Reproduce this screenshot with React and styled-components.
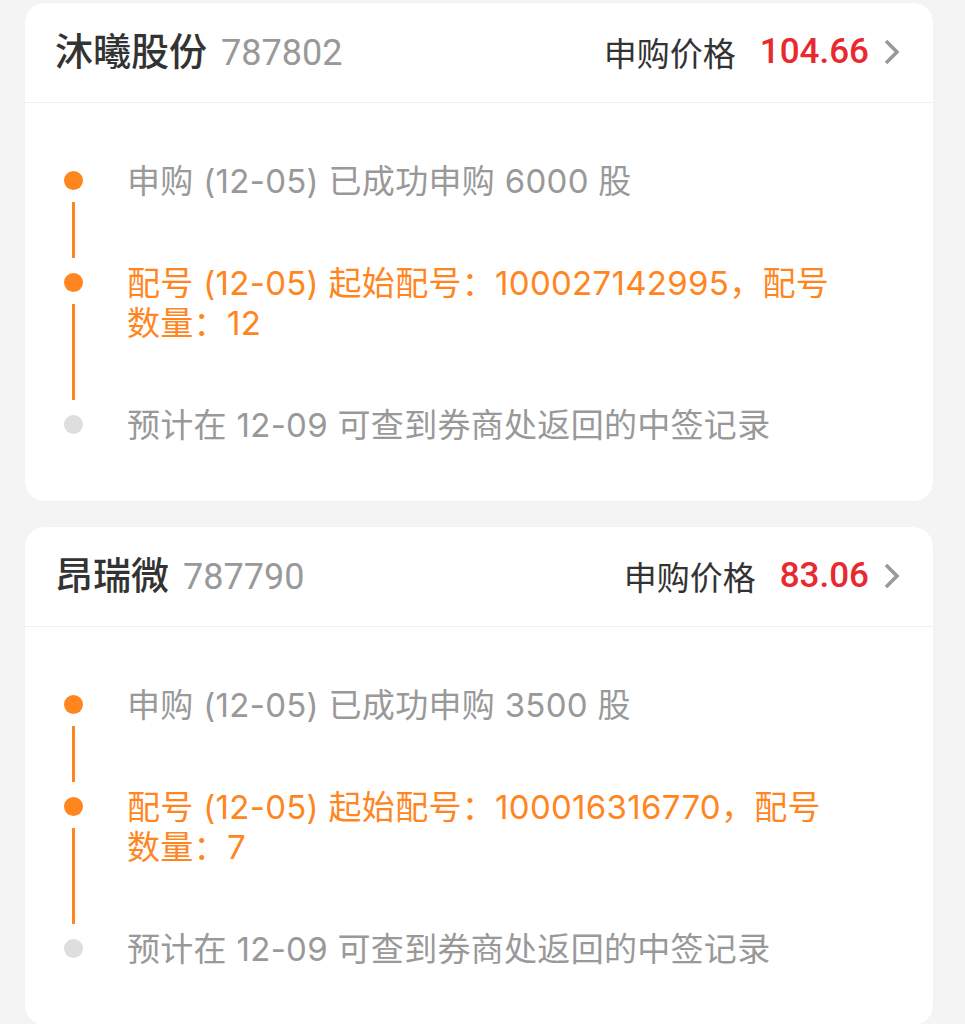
import React from "react";
import styled, { createGlobalStyle } from "styled-components";

const Global = createGlobalStyle`
  body {
    margin: 0;
    background: #f4f4f4;
    font-family: "Noto Sans CJK SC", "Noto Sans", sans-serif;
  }
`;

const Page = styled.div`
  display: flex;
  flex-direction: column;
  gap: 26px;
  padding: 3px 32px 40px 25px;
`;

const Card = styled.div`
  background: #fff;
  border-radius: 20px;
  overflow: hidden;
`;

const Header = styled.div`
  display: flex;
  align-items: center;
  justify-content: space-between;
  height: 99px;
  padding: 0 32px 0 30px;
  border-bottom: 1px solid #f0f0f0;
`;

const Name = styled.div`
  display: flex;
  align-items: baseline;
  gap: 14px;
  line-height: 1;
  margin-top: -4px;
`;

const Title = styled.span`
  font-size: 38px;
  font-weight: 500;
  color: #333;
`;

const Code = styled.span`
  font-family: Roboto, "Noto Sans", sans-serif;
  font-size: 36px;
  font-weight: 400;
  color: #999;
`;

const Price = styled.div`
  display: flex;
  align-items: center;
  margin-top: -2px;
`;

const Label = styled.span`
  font-size: 33px;
  color: #333;
  margin-right: 24px;
`;

const Value = styled.span`
  font-family: Roboto, "Noto Sans", sans-serif;
  font-size: 35px;
  font-weight: 500;
  color: #e8292f;
  margin-right: 14px;
`;

const Body = styled.div`
  padding: 58px 88px 56px 38px;
`;

const Step = styled.div`
  display: flex;
  padding-bottom: ${(p) => (p.last ? "0" : "62px")};
`;

const Marker = styled.div`
  width: 20px;
  margin-right: 44px;
  display: flex;
  flex-direction: column;
  align-items: center;
  padding-top: 10px;
  margin-bottom: -${(p) => (p.last ? "0" : "62px")};
`;

const Dot = styled.div`
  width: 19px;
  height: 19px;
  border-radius: 50%;
  background: ${(p) => (p.done ? "#ff861f" : "#dedede")};
  flex-shrink: 0;
`;

const Line = styled.div`
  width: 3px;
  flex: 1;
  background: #ff861f;
  margin: 12px 0 5px;
`;

const Text = styled.div`
  flex: 1;
  font-family: Inter, "Noto Sans CJK SC", sans-serif;
  font-size: 33px;
  letter-spacing: 0.3px;
  line-height: 40px;
  color: ${(p) => (p.active ? "#ff861f" : "#999")};
`;

const Chevron = () => (
  <svg width="18" height="30" viewBox="0 0 18 30">
    <path d="M3 4 L14 15 L3 26" fill="none" stroke="#999" strokeWidth="3.5" />
  </svg>
);

const data = [
  {
    name: "沐曦股份",
    code: "787802",
    price: "104.66",
    qty: "6000",
    start: "100027142995",
    count: "12",
  },
  {
    name: "昂瑞微",
    code: "787790",
    price: "83.06",
    qty: "3500",
    start: "100016316770",
    count: "7",
  },
];

function StockCard({ item }) {
  return (
    <Card>
      <Header>
        <Name>
          <Title>{item.name}</Title>
          <Code>{item.code}</Code>
        </Name>
        <Price>
          <Label>申购价格</Label>
          <Value>{item.price}</Value>
          <Chevron />
        </Price>
      </Header>
      <Body>
        <Step>
          <Marker>
            <Dot done />
            <Line />
          </Marker>
          <Text>申购 (12-05) 已成功申购 {item.qty} 股</Text>
        </Step>
        <Step>
          <Marker>
            <Dot done />
            <Line />
          </Marker>
          <Text active>
            配号 (12-05) 起始配号：{item.start}，配号数量：{item.count}
          </Text>
        </Step>
        <Step last>
          <Marker last>
            <Dot />
          </Marker>
          <Text>预计在 12-09 可查到券商处返回的中签记录</Text>
        </Step>
      </Body>
    </Card>
  );
}

export default function App() {
  return (
    <>
      <Global />
      <Page>
        {data.map((item) => (
          <StockCard key={item.code} item={item} />
        ))}
      </Page>
    </>
  );
}
